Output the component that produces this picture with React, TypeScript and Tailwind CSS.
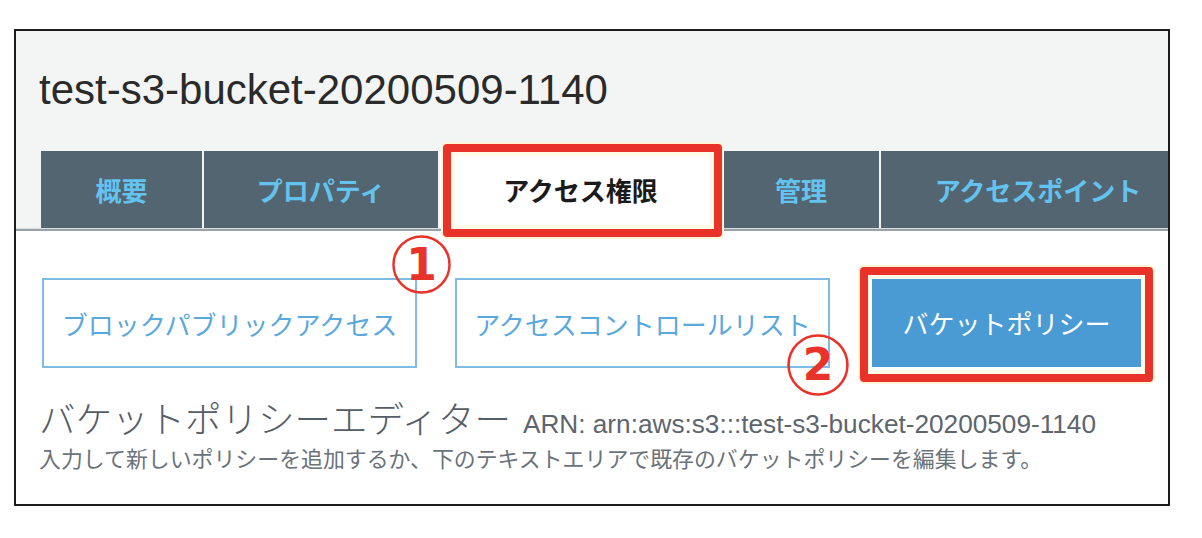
const jp = "font-['Noto_Sans_CJK_JP',sans-serif]";

const tabs = [
  { label: "概要", width: "w-[161px]" },
  { label: "プロパティ", width: "w-[234px]" },
  { label: "アクセス権限", width: "w-[281px]", active: true },
  { label: "管理", width: "w-[156px]" },
  { label: "アクセスポイント", width: "w-[314px]" },
];

function Callout({ n, className }: Readonly<{ n: string; className: string }>) {
  return (
    <div className={`absolute flex items-center justify-center ${className}`}>
      <svg className="absolute inset-0 h-full w-full" viewBox="0 0 60 60">
        <circle cx="30" cy="30" r="28.5" fill="none" stroke="#e8332b" strokeWidth="2.5" />
      </svg>
      <span className="relative font-['DejaVu_Sans',sans-serif] text-[44px] font-bold leading-none text-[#e8332b]">
        {n}
      </span>
    </div>
  );
}

function Highlight({ className }: Readonly<{ className: string }>) {
  return (
    <div
      className={`pointer-events-none absolute rounded-[4px] border-[8px] border-[#e8322a] shadow-[0_0_0_2px_#fdf5d6,inset_0_0_0_4px_#fffbe8] ${className}`}
    />
  );
}

export default function App() {
  return (
    <div className="min-h-[538px] w-[1202px] bg-white pl-[14px] pt-[29px]">
      <div className="relative h-[477px] w-[1156px] overflow-hidden border-2 border-[#1c1c1c] bg-white">
        <header className="bg-[#f3f5f5] pt-[38px]">
          <h1 className="pl-[23px] font-['Liberation_Sans',sans-serif] text-[42px] leading-none text-[#2a2a2a]">
            test-s3-bucket-20200509-1140
          </h1>
          <nav className="mt-[40px] flex h-[77px] gap-[2px] pl-[25px]">
            {tabs.map((t) => (
              <div
                key={t.label}
                className={`flex shrink-0 items-center justify-center ${t.width} ${
                  t.active ? "bg-white text-[#1b1b1b]" : "bg-[#536571] text-[#63c3ee]"
                }`}
              >
                <span className={`${jp} text-[26px] font-bold`}>{t.label}</span>
              </div>
            ))}
          </nav>
        </header>
        <div className="h-[1px] bg-[#d9dee1]" />
        <div className="h-[2px] bg-[#97a1a9]" />

        <div className="flex pl-[26px] pt-[47px]">
          <button className={`h-[90px] w-[375px] border-2 border-[#7fbce5] bg-white ${jp} text-[26px] text-[#5ba8dc]`}>
            ブロックパブリックアクセス
          </button>
          <button className={`ml-[38px] h-[90px] w-[375px] border-2 border-[#7fbce5] bg-white ${jp} text-[26px] text-[#5ba8dc]`}>
            アクセスコントロールリスト
          </button>
          <button className={`ml-[42px] h-[89px] w-[269px] bg-[#4a9ad4] ${jp} text-[26px] text-white`}>
            バケットポリシー
          </button>
        </div>

        <div className="flex items-baseline pl-[23px] pt-[32px]">
          <h2 className={`${jp} text-[36.5px] font-light leading-none text-[#555d66]`}>
            バケットポリシーエディター
          </h2>
          <span className="ml-[12px] font-['Liberation_Sans',sans-serif] text-[26.2px] leading-none text-[#5d656e]">
            ARN: arn:aws:s3:::test-s3-bucket-20200509-1140
          </span>
        </div>
        <p className={`pl-[23px] pt-[10px] ${jp} text-[21.9px] leading-none text-[#6a727a]`}>
          入力して新しいポリシーを追加するか、下のテキストエリアで既存のバケットポリシーを編集します。
        </p>

        <Highlight className="left-[427px] top-[113px] h-[93px] w-[279px]" />
        <Highlight className="left-[844px] top-[236px] h-[115px] w-[293px]" />
        <Callout n="1" className="left-[376px] top-[204px] h-[59px] w-[59px]" />
        <Callout n="2" className="left-[771px] top-[303px] h-[62px] w-[62px]" />
      </div>
    </div>
  );
}
